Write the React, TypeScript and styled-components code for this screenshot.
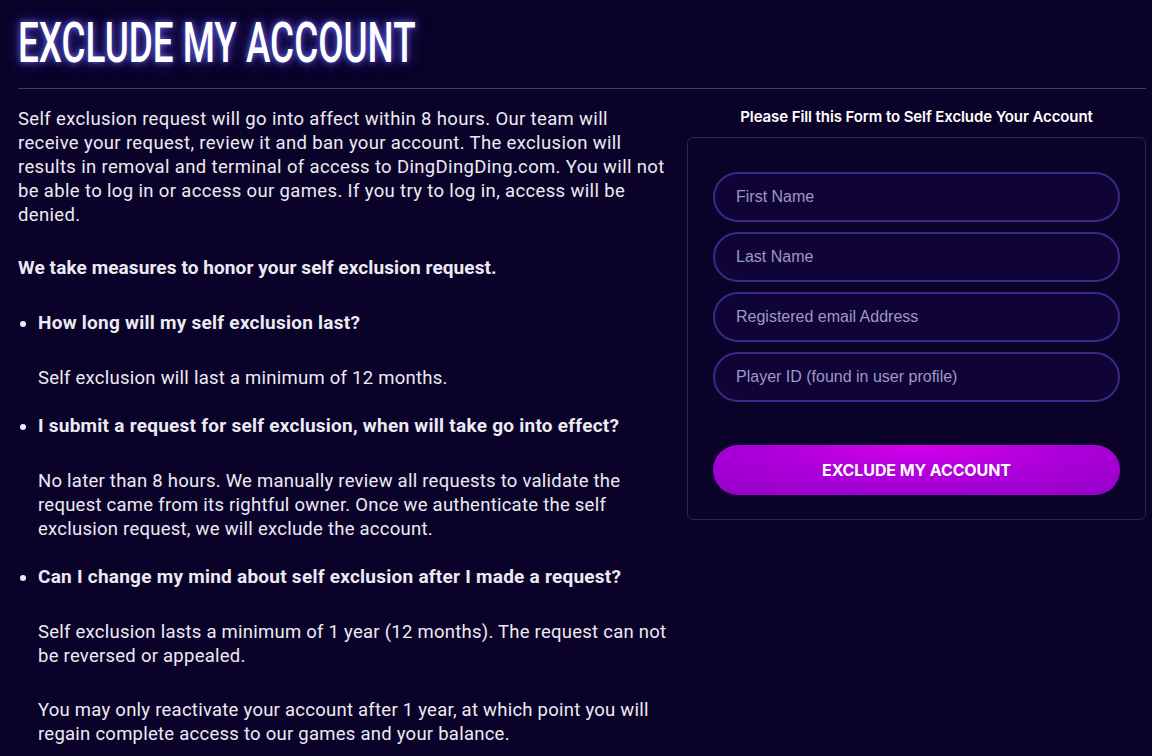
import { createGlobalStyle, styled } from 'styled-components';

const GlobalStyle = createGlobalStyle`
  * {
    box-sizing: border-box;
  }
  body {
    margin: 0;
    background: #0b0229;
    color: #ecebf3;
    font-family: 'Roboto', 'Liberation Sans', sans-serif;
  }
`;

const Page = styled.div`
  padding: 0 6px 0 18px;
  min-height: 756px;
`;

const Header = styled.header`
  border-bottom: 1px solid #403a68;
  padding-bottom: 17px;
`;

const Title = styled.h1`
  margin: 15px 0 0;
  font-family: 'Roboto', sans-serif;
  font-size: 56px;
  line-height: 1;
  font-weight: 500;
  color: #ffffff;
  display: inline-block;
  transform: scaleX(0.657);
  transform-origin: left center;
  white-space: nowrap;
  text-shadow: 0 0 8px rgba(110, 110, 255, 0.9), 0 0 18px rgba(80, 80, 240, 0.6);
`;

const Columns = styled.div`
  display: grid;
  grid-template-columns: 650px 459px;
  justify-content: space-between;
  padding-top: 18px;
`;

const Info = styled.section`
  font-size: 18.5px;
  line-height: 24px;
  letter-spacing: 0.35px;
`;

const Text = styled.p`
  margin: 0 0 29px;
`;

const Lead = styled.p`
  margin: 0 0 31px;
  font-size: 19px;
  font-weight: 700;
  letter-spacing: 0.1px;
`;

const List = styled.ul`
  margin: 0;
  padding-left: 20px;
`;

const Item = styled.li`
  margin-bottom: 24px;
`;

const Question = styled.div`
  font-size: 19px;
  font-weight: 700;
  letter-spacing: 0.25px;
  margin-bottom: 31px;
`;

const Answer = styled.p`
  margin: 0;
  letter-spacing: 0.25px;
  & + & {
    margin-top: 30px;
  }
`;

const FormSide = styled.aside`
  display: flex;
  flex-direction: column;
`;

const FormTitle = styled.h2`
  margin: 0 0 10px;
  font-family: 'Inter', 'Roboto', sans-serif;
  font-size: 15px;
  line-height: 20px;
  font-weight: 600;
  letter-spacing: -0.1px;
  text-align: center;
  color: #ffffff;
`;

const Card = styled.form`
  border: 1px solid #2a2454;
  border-radius: 6px;
  padding: 34px 25px 24px;
  display: flex;
  flex-direction: column;
  gap: 10px;
`;

const Field = styled.input`
  width: 100%;
  height: 50px;
  border: 2px solid #362b86;
  border-radius: 25px;
  background: #0f0435;
  padding: 0 21px;
  font-family: 'Liberation Sans', Arial, sans-serif;
  font-size: 16px;
  color: #ffffff;
  outline: none;
  &::placeholder {
    color: #9e98c6;
  }
`;

const Submit = styled.button`
  margin-top: 33px;
  height: 50px;
  width: 100%;
  border: none;
  border-radius: 25px;
  background: radial-gradient(ellipse 70% 120% at 50% 0%, #d400ec 0%, #ac00d9 55%, #9a00cc 100%);
  color: #ffffff;
  font-family: 'Inter', 'Roboto', sans-serif;
  font-size: 16px;
  font-weight: 700;
  letter-spacing: -0.1px;
  cursor: pointer;
`;

const faq = [
  {
    q: 'How long will my self exclusion last?',
    a: ['Self exclusion will last a minimum of 12 months.'],
  },
  {
    q: 'I submit a request for self exclusion, when will take go into effect?',
    a: [
      'No later than 8 hours. We manually review all requests to validate the request came from its rightful owner. Once we authenticate the self exclusion request, we will exclude the account.',
    ],
  },
  {
    q: 'Can I change my mind about self exclusion after I made a request?',
    a: [
      'Self exclusion lasts a minimum of 1 year (12 months). The request can not be reversed or appealed.',
      'You may only reactivate your account after 1 year, at which point you will regain complete access to our games and your balance.',
    ],
  },
];

export default function App() {
  return (
    <Page>
      <GlobalStyle />
      <Header>
        <Title>EXCLUDE MY ACCOUNT</Title>
      </Header>
      <Columns>
        <Info>
          <Text>
            Self exclusion request will go into affect within 8 hours. Our team will receive your
            request, review it and ban your account. The exclusion will results in removal and
            terminal of access to DingDingDing.com. You will not be able to log in or access our
            games. If you try to log in, access will be denied.
          </Text>
          <Lead>We take measures to honor your self exclusion request.</Lead>
          <List>
            {faq.map((item) => (
              <Item key={item.q}>
                <Question>{item.q}</Question>
                {item.a.map((line) => (
                  <Answer key={line}>{line}</Answer>
                ))}
              </Item>
            ))}
          </List>
        </Info>
        <FormSide>
          <FormTitle>Please Fill this Form to Self Exclude Your Account</FormTitle>
          <Card onSubmit={(e) => e.preventDefault()}>
            <Field placeholder="First Name" />
            <Field placeholder="Last Name" />
            <Field placeholder="Registered email Address" />
            <Field placeholder="Player ID (found in user profile)" />
            <Submit type="submit">EXCLUDE MY ACCOUNT</Submit>
          </Card>
        </FormSide>
      </Columns>
    </Page>
  );
}
